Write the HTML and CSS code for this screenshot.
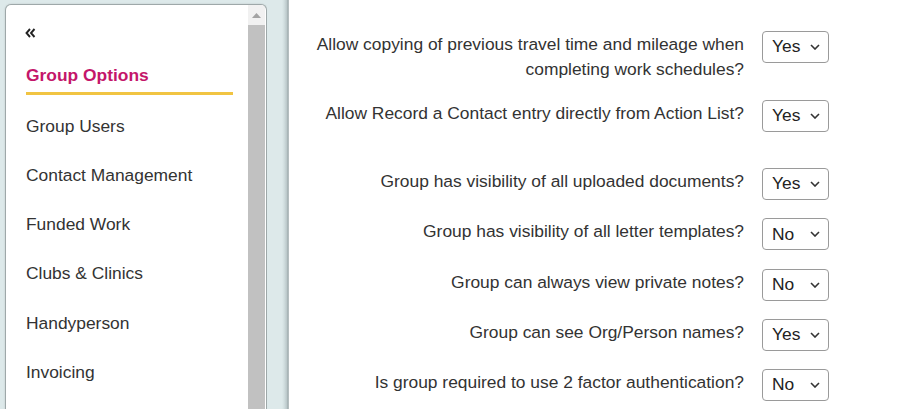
FILE: index.html
```html
<!DOCTYPE html>
<html lang="en">
<head>
<meta charset="utf-8">
<title>Group Options</title>
<link rel="stylesheet" href="styles.css">
</head>
<body>
<div class="page">
  <aside class="sidebar-wrap">
    <div class="sidebar">
      <nav class="nav">
        <div class="collapse">
          <svg width="11" height="10" viewBox="0 0 11 10" aria-hidden="true">
            <path d="M5 1 L1.5 5 L5 9 M9.5 1 L6 5 L9.5 9" fill="none" stroke="#222" stroke-width="1.9"/>
          </svg>
        </div>
        <a class="nav-item active">Group Options</a>
        <a class="nav-item">Group Users</a>
        <a class="nav-item">Contact Management</a>
        <a class="nav-item">Funded Work</a>
        <a class="nav-item">Clubs &amp; Clinics</a>
        <a class="nav-item">Handyperson</a>
        <a class="nav-item">Invoicing</a>
      </nav>
      <div class="scrollbar">
        <div class="scroll-up">
          <svg width="9" height="5" viewBox="0 0 9 5" aria-hidden="true"><path d="M0 5 L4.5 0 L9 5 Z" fill="#a3a3a3"/></svg>
        </div>
        <div class="scroll-thumb"></div>
      </div>
    </div>
  </aside>
  <div class="gutter"></div>
  <main class="main">
    <div class="row tall">
      <div class="label">Allow copying of previous travel time and mileage when<br>completing work schedules?</div>
      <div class="select"><span>Yes</span><svg width="10" height="6" viewBox="0 0 10 6"><path d="M1 1 L5 5 L9 1" fill="none" stroke="#333" stroke-width="1.6"/></svg></div>
    </div>
    <div class="row tall2">
      <div class="label">Allow Record a Contact entry directly from Action List?</div>
      <div class="select"><span>Yes</span><svg width="10" height="6" viewBox="0 0 10 6"><path d="M1 1 L5 5 L9 1" fill="none" stroke="#333" stroke-width="1.6"/></svg></div>
    </div>
    <div class="row">
      <div class="label">Group has visibility of all uploaded documents?</div>
      <div class="select"><span>Yes</span><svg width="10" height="6" viewBox="0 0 10 6"><path d="M1 1 L5 5 L9 1" fill="none" stroke="#333" stroke-width="1.6"/></svg></div>
    </div>
    <div class="row">
      <div class="label">Group has visibility of all letter templates?</div>
      <div class="select"><span>No</span><svg width="10" height="6" viewBox="0 0 10 6"><path d="M1 1 L5 5 L9 1" fill="none" stroke="#333" stroke-width="1.6"/></svg></div>
    </div>
    <div class="row">
      <div class="label">Group can always view private notes?</div>
      <div class="select"><span>No</span><svg width="10" height="6" viewBox="0 0 10 6"><path d="M1 1 L5 5 L9 1" fill="none" stroke="#333" stroke-width="1.6"/></svg></div>
    </div>
    <div class="row">
      <div class="label">Group can see Org/Person names?</div>
      <div class="select"><span>Yes</span><svg width="10" height="6" viewBox="0 0 10 6"><path d="M1 1 L5 5 L9 1" fill="none" stroke="#333" stroke-width="1.6"/></svg></div>
    </div>
    <div class="row">
      <div class="label">Is group required to use 2 factor authentication?</div>
      <div class="select"><span>No</span><svg width="10" height="6" viewBox="0 0 10 6"><path d="M1 1 L5 5 L9 1" fill="none" stroke="#333" stroke-width="1.6"/></svg></div>
    </div>
  </main>
</div>
</body>
</html>
```
FILE: styles.css
```css
* { box-sizing: border-box; }
html, body { margin: 0; padding: 0; height: 100%; overflow: hidden; }
body {
  background: #dde9ea;
  font-family: "Liberation Sans", Arial, sans-serif;
  font-size: 17.4px;
  color: #333;
}
.page {
  display: flex;
  height: 409px;
}
.sidebar-wrap {
  padding: 4px 0 0 5px;
  width: 267px;
  flex: none;
}
.sidebar {
  display: flex;
  height: 420px;
  background: #fff;
  border: 1px solid #9ea8a9;
  border-bottom: none;
  border-radius: 6px 6px 0 0;
  box-shadow: 0 0 2px rgba(0,0,0,0.15);
  overflow: hidden;
}
.nav {
  flex: 1;
  padding: 0 15px 0 20px;
  display: flex;
  flex-direction: column;
}
.collapse {
  height: 45.5px;
  display: flex;
  align-items: center;
  padding-top: 8px;
}
.collapse svg { margin-left: -1px; margin-top: 2px; }
.nav-item {
  display: block;
  padding: 12px 0;
  line-height: 25.2px;
  color: #333;
  text-decoration: none;
}
.nav-item.active {
  font-weight: bold;
  color: #c4166a;
  padding-bottom: 4px;
  border-bottom: 3px solid #f1c442;
  margin-bottom: 7px;
}
.scrollbar {
  width: 17px;
  flex: none;
  margin-right: 1px;
  display: flex;
  flex-direction: column;
  background: #f1f1f1;
}
.scroll-up {
  height: 20px;
  display: flex;
  align-items: center;
  justify-content: center;
}
.scroll-thumb {
  flex: 1;
  background: #c1c1c1;
}
.gutter {
  width: 22px;
  flex: none;
  background: linear-gradient(to right, #dde9ea 0, #dde9ea 15px, #d2dfe0 17px, #b9c6c8 20px, #9aa6a8 21px, #cfd6d7 22px);
}
.main {
  flex: 1;
  background: #fff;
  padding: 31px 71px 0 0;
  display: flex;
  flex-direction: column;
  align-items: flex-end;
}
.row {
  display: flex;
  align-items: flex-start;
  gap: 18px;
  min-height: 50.3px;
}
.row.tall { min-height: 69px; }
.row.tall2 { min-height: 68px; }
.label {
  text-align: right;
  line-height: 25px;
  padding-top: 1px;
  color: #333;
}
.select {
  width: 67px;
  height: 32px;
  border: 1px solid #9a9a9a;
  border-radius: 4px;
  display: flex;
  align-items: center;
  justify-content: space-between;
  padding: 0 8px 0 9px;
  color: #222;
  background: #fff;
}
.select span { line-height: 1; }
```
